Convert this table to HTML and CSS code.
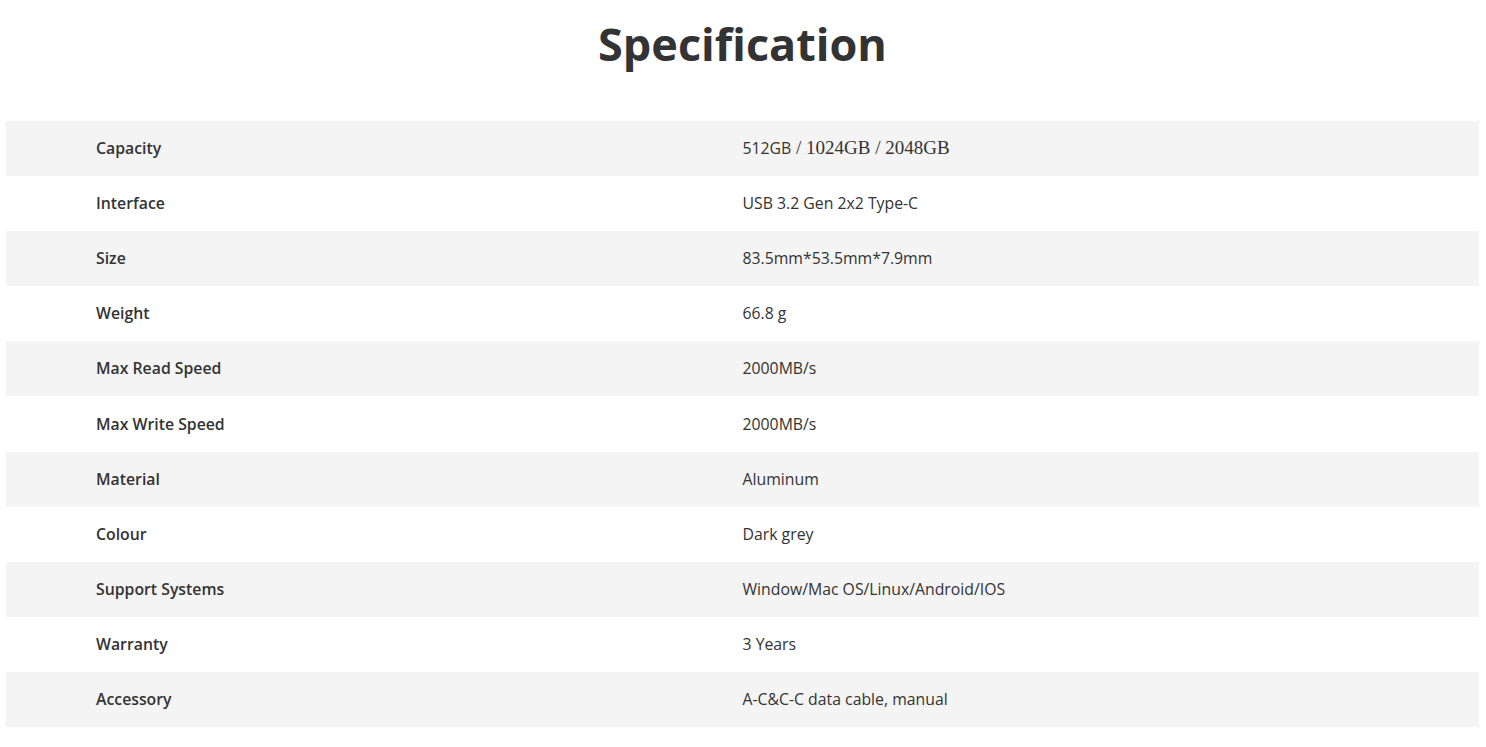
FILE: index.html
```html
<!DOCTYPE html>
<html lang="en">
<head>
<meta charset="utf-8">
<title>Specification</title>
<link rel="stylesheet" href="styles.css">
</head>
<body>
<section class="spec">
  <h1 class="spec-title">Specification</h1>
  <table class="spec-table">
    <tbody>
      <tr><th>Capacity</th><td>512GB<span class="serif"> / 1024GB / 2048GB</span></td></tr>
      <tr><th>Interface</th><td>USB 3.2 Gen 2x2 Type-C</td></tr>
      <tr><th>Size</th><td>83.5mm*53.5mm*7.9mm</td></tr>
      <tr><th>Weight</th><td>66.8 g</td></tr>
      <tr><th>Max Read Speed</th><td>2000MB/s</td></tr>
      <tr><th>Max Write Speed</th><td>2000MB/s</td></tr>
      <tr><th>Material</th><td>Aluminum</td></tr>
      <tr><th>Colour</th><td>Dark grey</td></tr>
      <tr><th>Support Systems</th><td>Window/Mac OS/Linux/Android/IOS</td></tr>
      <tr><th>Warranty</th><td>3 Years</td></tr>
      <tr><th>Accessory</th><td>A-C&amp;C-C data cable, manual</td></tr>
    </tbody>
  </table>
</section>
</body>
</html>
```
FILE: styles.css
```css
html, body {
  margin: 0;
  padding: 0;
  background: #ffffff;
}
body {
  font-family: "Open Sans", "Liberation Sans", sans-serif;
  color: #333333;
}
.spec {
  padding: 21px 7px 0 6px;
}
.spec-title {
  margin: 0 0 55px;
  font-size: 45px;
  line-height: 45px;
  font-weight: 700;
  text-align: center;
  color: #333333;
}
.spec-table {
  width: 100%;
  border-collapse: collapse;
  table-layout: fixed;
}
.spec-table tr {
  height: 55.1px;
}
.spec-table tr:nth-child(odd) {
  background: #f4f4f4;
}
.spec-table th,
.spec-table td {
  padding: 0 0 1px;
  font-size: 15.8px;
  line-height: 22px;
  text-align: left;
  vertical-align: middle;
}
.spec-table th {
  width: 50%;
  padding-left: 90px;
  font-weight: 600;
  box-sizing: border-box;
}
.spec-table td {
  font-weight: 400;
}
.serif {
  font-family: "Liberation Serif", "Times New Roman", serif;
  font-size: 19px;
}
```
